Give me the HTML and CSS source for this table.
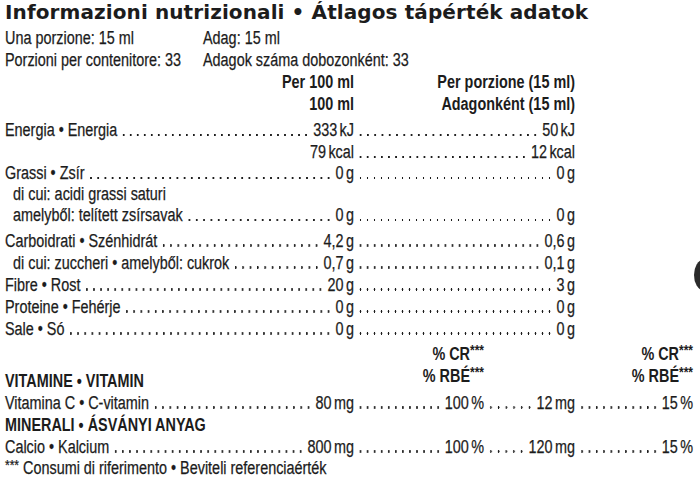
FILE: index.html
```html
<!DOCTYPE html>
<html lang="it">
<head>
<meta charset="utf-8">
<title>Informazioni nutrizionali</title>
<link rel="stylesheet" href="styles.css">
</head>
<body>
<main class="label">
  <h1 class="title">Informazioni nutrizionali • Átlagos tápérték adatok</h1>
  <div class="narrow">
    <div class="serving">
      <span>Una porzione: 15 ml</span><span>Adag: 15 ml</span>
      <span>Porzioni per contenitore: 33</span><span>Adagok száma dobozonként: 33</span>
    </div>

    <div class="table">
      <div class="row head">
        <div class="c1 right">Per 100 ml<br>100 ml</div>
        <div class="c23 right">Per porzione (15 ml)<br>Adagonként (15 ml)</div>
      </div>

      <div class="row r-energy">
        <div class="c1 seg"><span class="lbl">Energia • Energia</span><i class="dots"></i><span class="val">333 kJ</span></div>
        <div class="c23 seg"><i class="dots"></i><span class="val">50 kJ</span></div>
      </div>
      <div class="row r-kcal">
        <div class="c1 seg"><span class="val push">79 kcal</span></div>
        <div class="c23 seg"><i class="dots"></i><span class="val">12 kcal</span></div>
      </div>
      <div class="row r-fat">
        <div class="c1 seg"><span class="lbl">Grassi • Zsír</span><i class="dots"></i><span class="val">0 g</span></div>
        <div class="c23 seg"><i class="dots"></i><span class="val">0 g</span></div>
      </div>
      <div class="row r-sub1">
        <div class="c1 seg sub"><span class="lbl">di cui: acidi grassi saturi</span></div>
      </div>
      <div class="row r-sub2">
        <div class="c1 seg sub"><span class="lbl">amelyből: telített zsírsavak</span><i class="dots"></i><span class="val">0 g</span></div>
        <div class="c23 seg"><i class="dots"></i><span class="val">0 g</span></div>
      </div>
      <div class="row r-carb">
        <div class="c1 seg"><span class="lbl">Carboidrati • Szénhidrát</span><i class="dots"></i><span class="val">4,2 g</span></div>
        <div class="c23 seg"><i class="dots"></i><span class="val">0,6 g</span></div>
      </div>
      <div class="row r-sugar">
        <div class="c1 seg sub"><span class="lbl">di cui: zuccheri • amelyből: cukrok</span><i class="dots"></i><span class="val">0,7 g</span></div>
        <div class="c23 seg"><i class="dots"></i><span class="val">0,1 g</span></div>
      </div>
      <div class="row r-fibre">
        <div class="c1 seg"><span class="lbl">Fibre • Rost</span><i class="dots"></i><span class="val">20 g</span></div>
        <div class="c23 seg"><i class="dots"></i><span class="val">3 g</span></div>
      </div>
      <div class="row r-prot">
        <div class="c1 seg"><span class="lbl">Proteine • Fehérje</span><i class="dots"></i><span class="val">0 g</span></div>
        <div class="c23 seg"><i class="dots"></i><span class="val">0 g</span></div>
      </div>
      <div class="row r-salt">
        <div class="c1 seg"><span class="lbl">Sale • Só</span><i class="dots"></i><span class="val">0 g</span></div>
        <div class="c23 seg"><i class="dots"></i><span class="val">0 g</span></div>
      </div>

      <div class="row vit-head">
        <div class="c1 section">VITAMINE • VITAMIN</div>
        <div class="c2 right pct">% CR<sup>***</sup><br>% RBÉ<sup>***</sup></div>
        <div class="c4 right pct">% CR<sup>***</sup><br>% RBÉ<sup>***</sup></div>
      </div>
      <div class="row r-vit">
        <div class="c1 seg"><span class="lbl">Vitamina C • C-vitamin</span><i class="dots"></i><span class="val">80 mg</span></div>
        <div class="c2 seg"><i class="dots"></i><span class="val">100 %</span></div>
        <div class="c3 seg"><i class="dots"></i><span class="val">12 mg</span></div>
        <div class="c4 seg"><i class="dots"></i><span class="val">15 %</span></div>
      </div>
      <div class="row r-min">
        <div class="c1 section">MINERALI • ÁSVÁNYI ANYAG</div>
      </div>
      <div class="row r-calc">
        <div class="c1 seg"><span class="lbl">Calcio • Kalcium</span><i class="dots"></i><span class="val">800 mg</span></div>
        <div class="c2 seg"><i class="dots"></i><span class="val">100 %</span></div>
        <div class="c3 seg"><i class="dots"></i><span class="val">120 mg</span></div>
        <div class="c4 seg"><i class="dots"></i><span class="val">15 %</span></div>
      </div>
    </div>

    <p class="foot"><sup>***</sup> Consumi di riferimento • Beviteli referenciaérték</p>
  </div>
  <span class="blob" aria-hidden="true"></span>
</main>
</body>
</html>
```

FILE: styles.css
```css
html, body {
  margin: 0;
  padding: 0;
  background: #ffffff;
}

body {
  width: 700px;
  height: 483px;
  overflow: hidden;
  color: #1c1c1c;
  font-family: "Liberation Sans", Arial, sans-serif;
  font-size: 18px;
  line-height: 22px;
}

.label {
  position: relative;
  padding: 0 5px;
  height: 483px;
  box-sizing: border-box;
}

.title {
  margin: 0;
  font-family: "DejaVu Sans", "Liberation Sans", sans-serif;
  font-weight: 700;
  font-size: 20px;
  line-height: 24px;
  letter-spacing: 0.1px;
  white-space: nowrap;
}

/* condensed face: the label text is a narrow grotesque */
.narrow {
  width: 862.5px;
  transform: scaleX(0.8);
  transform-origin: 0 0;
  -webkit-text-stroke: 0.25px #1c1c1c;
}

.serving {
  margin-top: 3px;
  display: grid;
  grid-template-columns: 247.5px auto;
  white-space: nowrap;
}

.table {
  --cols: 436.25px 162.5px 113.75px 147.5px;
}

.row {
  display: grid;
  grid-template-columns: var(--cols);
  white-space: nowrap;
}

.c1 { grid-column: 1; }
.c2 { grid-column: 2; }
.c3 { grid-column: 3; }
.c4 { grid-column: 4; }
.c23 { grid-column: 2 / 4; }

.right { text-align: right; }

.head {
  font-weight: 700;
  -webkit-text-stroke: 0;
}

.seg {
  display: flex;
  align-items: baseline;
}

.sub {
  padding-left: 10px;
}

.lbl { flex: none; }

.val {
  flex: none;
  word-spacing: -2px;
}

.push { margin-left: auto; }

.dots {
  flex: 1 1 auto;
  height: 2.4px;
  margin: 0 4px 0 4px;
  background-image: radial-gradient(ellipse 1.45px 1.2px at 50% 50%, #1c1c1c 70%, transparent 100%);
  background-size: 8.75px 2.4px;
  background-repeat: space no-repeat;
  background-position: right bottom;
}

.r-energy { margin-top: 4px; }
.r-fat, .r-sub1, .r-sub2 { line-height: 21px; }
.r-carb { margin-top: 3.5px; }
.vit-head { margin-top: 3px; }

.section {
  font-weight: 700;
  align-self: end;
  -webkit-text-stroke: 0;
}

.vit-head .section {
  margin-top: 27px;
}

.pct {
  font-weight: 700;
  -webkit-text-stroke: 0;
}

sup {
  font-size: 15px;
  line-height: 0;
  vertical-align: 5px;
}

.foot {
  margin: 0;
  margin-top: -1px;
}

.foot sup {
  vertical-align: 4px;
}

.blob {
  position: absolute;
  left: 694px;
  top: 260px;
  width: 18px;
  height: 30px;
  border-radius: 50%;
  background: #2b2b2b;
}
```
